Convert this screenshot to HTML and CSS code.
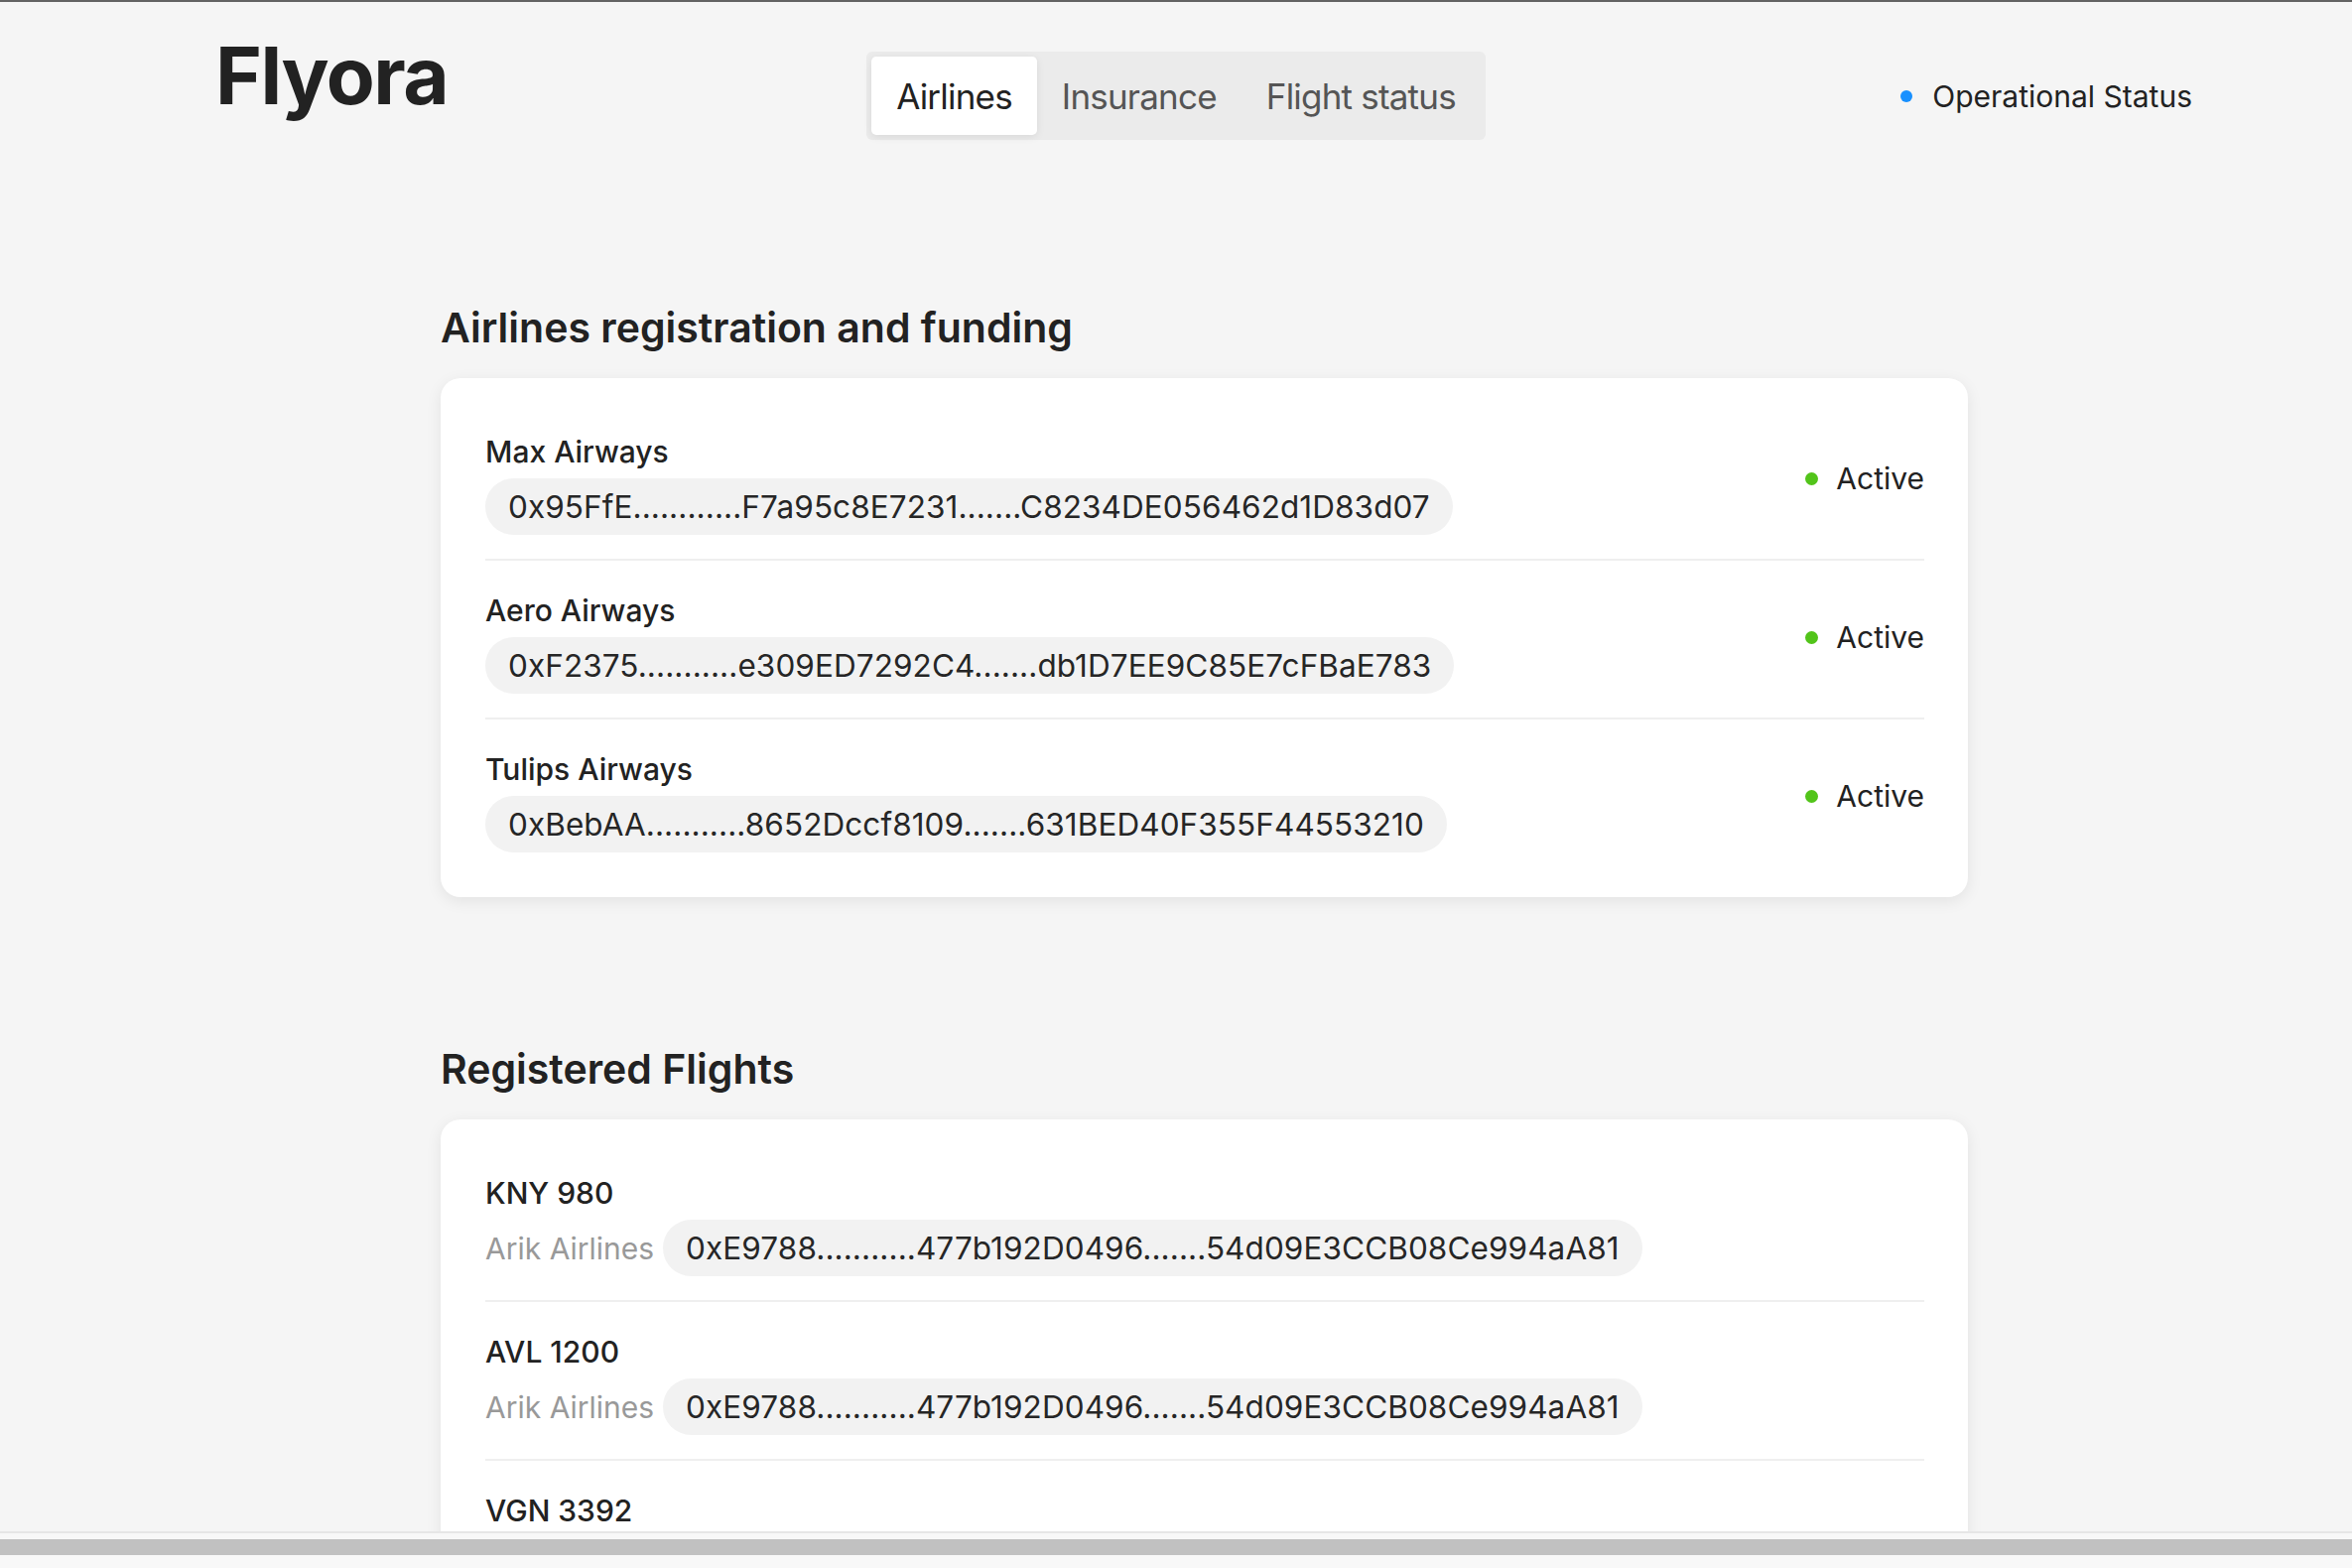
FILE: index.html
```html
<!DOCTYPE html>
<html lang="en">
<head>
<meta charset="utf-8">
<title>Flyora</title>
<link rel="stylesheet" href="styles.css">
</head>
<body>
<header class="topbar">
  <div class="brand">Flyora</div>
  <nav class="tabs">
    <span class="tab tab-active">Airlines</span>
    <span class="tab">Insurance</span>
    <span class="tab">Flight status</span>
  </nav>
  <div class="op-status"><span class="dot dot-blue"></span><span>Operational Status</span></div>
</header>

<main class="content">
  <section class="section">
    <h2 class="section-title">Airlines registration and funding</h2>
    <div class="card">
      <div class="row">
        <div class="row-main">
          <div class="row-name">Max Airways</div>
          <div class="row-line"><span class="pill">0x95FfE............F7a95c8E7231.......C8234DE056462d1D83d07</span></div>
        </div>
        <div class="status"><span class="dot dot-green"></span><span>Active</span></div>
      </div>
      <div class="row">
        <div class="row-main">
          <div class="row-name">Aero Airways</div>
          <div class="row-line"><span class="pill">0xF2375...........e309ED7292C4.......db1D7EE9C85E7cFBaE783</span></div>
        </div>
        <div class="status"><span class="dot dot-green"></span><span>Active</span></div>
      </div>
      <div class="row">
        <div class="row-main">
          <div class="row-name">Tulips Airways</div>
          <div class="row-line"><span class="pill">0xBebAA...........8652Dccf8109.......631BED40F355F44553210</span></div>
        </div>
        <div class="status"><span class="dot dot-green"></span><span>Active</span></div>
      </div>
    </div>
  </section>

  <section class="section section-second">
    <h2 class="section-title">Registered Flights</h2>
    <div class="card">
      <div class="row">
        <div class="row-main">
          <div class="row-name">KNY 980</div>
          <div class="row-line"><span class="airline">Arik Airlines</span><span class="pill">0xE9788...........477b192D0496.......54d09E3CCB08Ce994aA81</span></div>
        </div>
      </div>
      <div class="row">
        <div class="row-main">
          <div class="row-name">AVL 1200</div>
          <div class="row-line"><span class="airline">Arik Airlines</span><span class="pill">0xE9788...........477b192D0496.......54d09E3CCB08Ce994aA81</span></div>
        </div>
      </div>
      <div class="row">
        <div class="row-main">
          <div class="row-name">VGN 3392</div>
          <div class="row-line"><span class="airline">Arik Airlines</span><span class="pill">0xE9788...........477b192D0496.......54d09E3CCB08Ce994aA81</span></div>
        </div>
      </div>
    </div>
  </section>
</main>

<div class="hscroll"><div class="hscroll-thumb"></div></div>
</body>
</html>
```

FILE: styles.css
```css
html {
  overflow: hidden;
}
body {
  margin: 0;
  background: #f5f5f5;
  border-top: 2px solid #636363;
  font-family: "Inter", "Noto Sans", sans-serif;
  color: #222222;
}

.topbar {
  display: grid;
  grid-template-columns: 1fr auto 1fr;
  align-items: start;
  padding: 0 161px;
}
.brand {
  margin-top: 26px;
  padding-left: 56px;
  font-size: 80px;
  line-height: 96px;
  font-weight: 650;
  letter-spacing: -1.5px;
  color: #222222;
}
.tabs {
  margin-top: 50px;
  display: flex;
  padding: 5px;
  background: #ebebeb;
  border-radius: 6px;
}
.tab {
  display: flex;
  align-items: center;
  height: 79px;
  padding: 0 25px;
  font-size: 35px;
  letter-spacing: -0.8px;
  color: #555555;
  border-radius: 5px;
}
.tab-active {
  background: #ffffff;
  color: #222222;
  box-shadow: 0 2px 8px rgba(0, 0, 0, 0.08);
}
.op-status {
  justify-self: end;
  margin-top: 77px;
  display: flex;
  align-items: center;
  gap: 20px;
  font-size: 30px;
  line-height: 36px;
  color: #222222;
}
.dot {
  display: inline-block;
  width: 12px;
  height: 12px;
  border-radius: 50%;
  flex: none;
}
.dot-blue { background: #1890ff; }
.dot-green { background: #52c41a; width: 13px; height: 13px; }

.content {
  margin-left: 444px;
  width: 1539px;
}
.section {
  margin-top: 166px;
}
.section-second {
  margin-top: 150px;
}
.section-title {
  margin: 0 0 28px;
  font-size: 41px;
  line-height: 46px;
  font-weight: 600;
  color: #222222;
}
.card {
  background: #ffffff;
  border-radius: 20px;
  box-shadow: 0 4px 16px rgba(0, 0, 0, 0.08);
  padding: 24px 44px 21px 45px;
}
.row {
  display: flex;
  align-items: center;
  justify-content: space-between;
  padding: 32px 0 24px;
  border-bottom: 2px solid #efefef;
}
.row:last-child {
  border-bottom: none;
}
.row-main {
  display: flex;
  flex-direction: column;
  gap: 9px;
}
.row-name {
  font-size: 30px;
  line-height: 36px;
  font-weight: 500;
  color: #222222;
}
.row-line {
  display: flex;
  align-items: center;
  gap: 9px;
}
.airline {
  font-size: 30px;
  color: #999999;
}
.pill {
  display: inline-flex;
  align-items: center;
  height: 57px;
  padding: 0 23px;
  border-radius: 29px;
  background: #f2f2f2;
  font-size: 31.5px;
  letter-spacing: 0.08px;
  color: #262626;
  white-space: nowrap;
}
.status {
  display: flex;
  align-items: center;
  gap: 18px;
  margin-bottom: 12px;
  font-size: 30px;
  color: #222222;
}

.hscroll {
  position: fixed;
  left: 0;
  right: 0;
  bottom: 0;
  height: 29px;
  background: #f8f8f8;
  border-top: 2px solid #e6e6e6;
  padding-top: 6px;
  box-sizing: content-box;
}
.hscroll-thumb {
  height: 16px;
  background: #c1c1c1;
}
```
